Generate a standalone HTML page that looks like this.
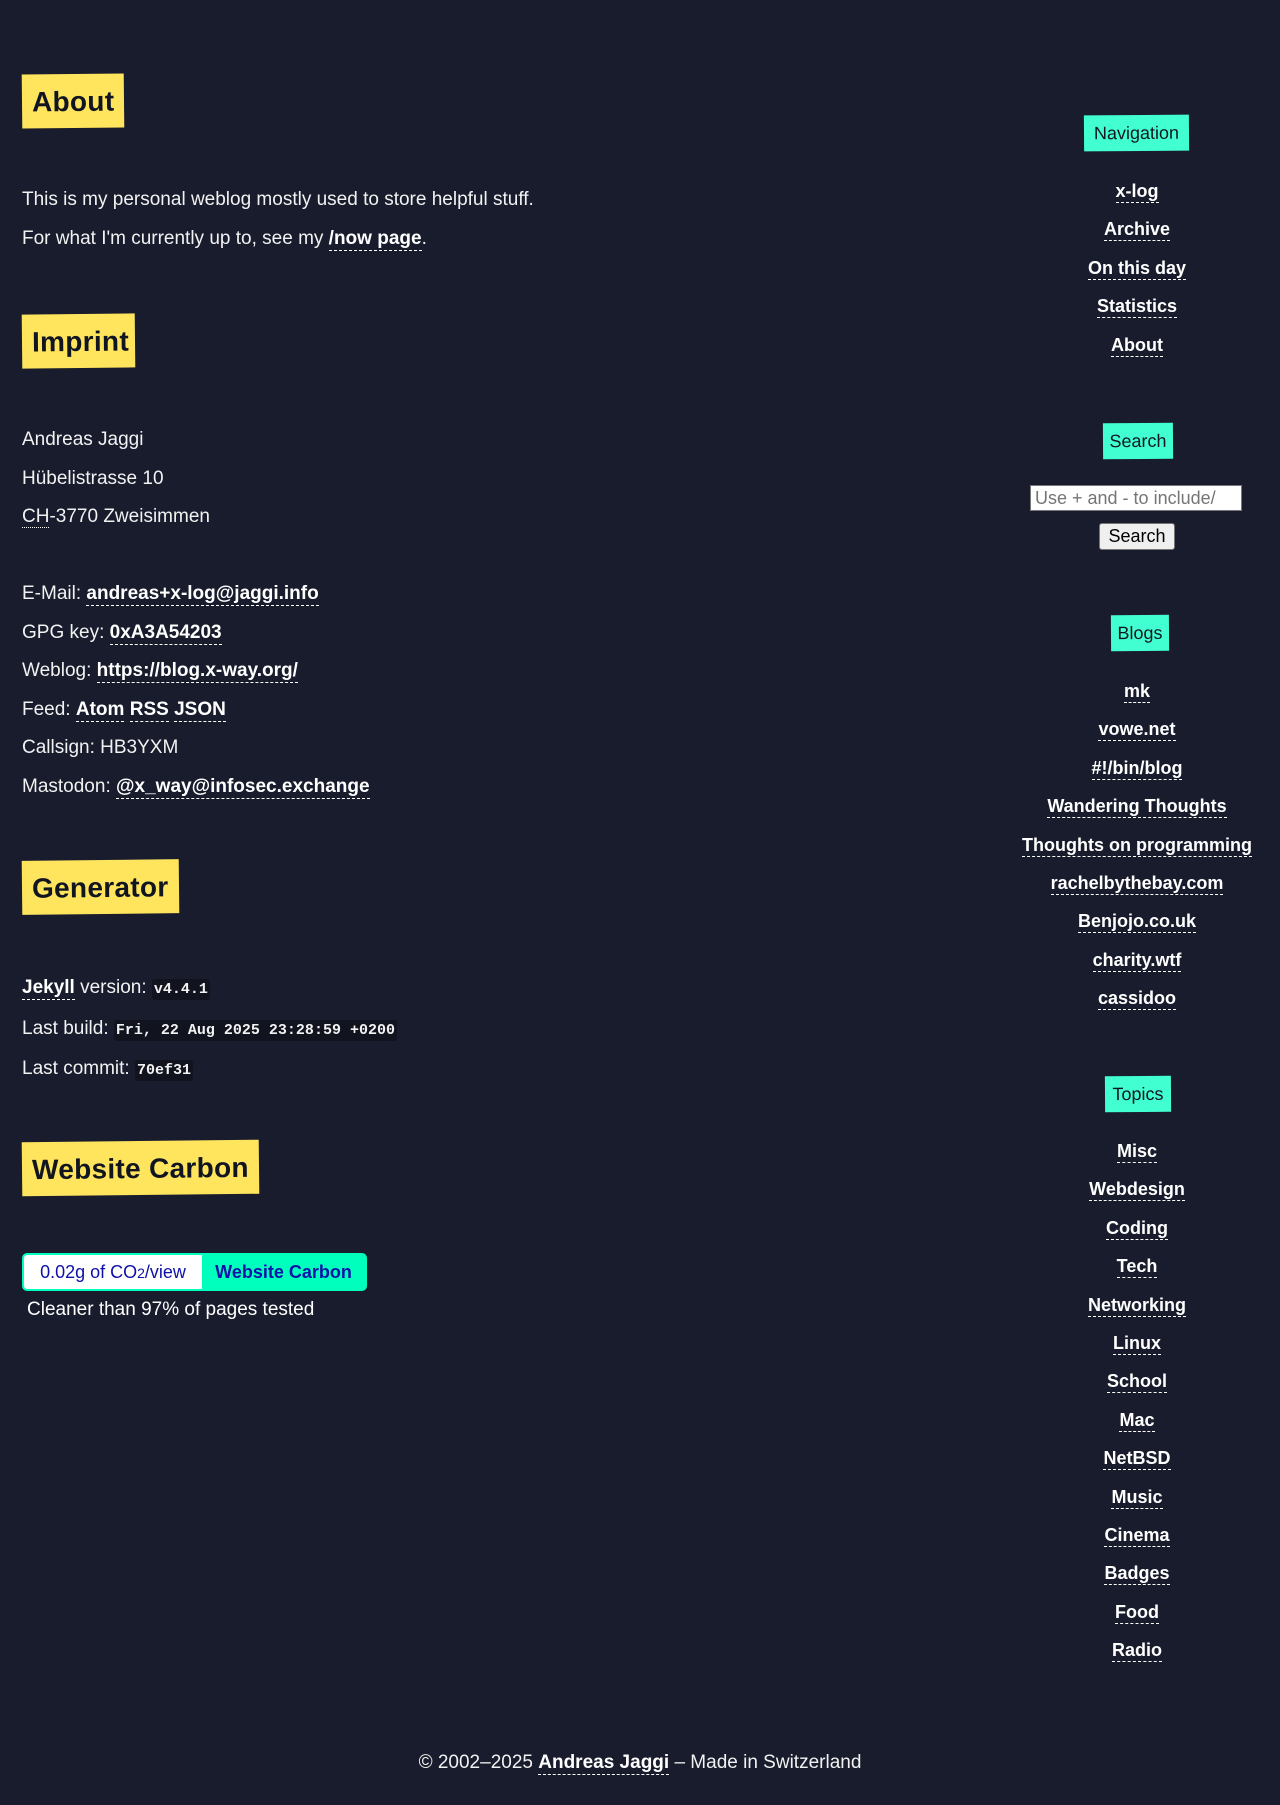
<!DOCTYPE html>
<html><head><meta charset="utf-8"><style>
html,body{margin:0;padding:0;background:#181c2c;}
body{width:1280px;height:1805px;position:relative;overflow:hidden;font-family:"Liberation Sans",sans-serif;color:#f2f2f2;font-size:18px;}
.h{position:absolute;left:22px;background:#ffe55e;color:#111520;font-weight:bold;font-size:28px;padding:0 10px;height:54px;line-height:56px;transform:rotate(-0.6deg);letter-spacing:0.3px}
.blk{position:absolute;left:22px;line-height:38.6px;white-space:nowrap;font-size:19px}
a{color:#fff;font-weight:bold;text-decoration:none;border-bottom:1px dashed #fff;padding-bottom:1px}
code{font-family:"Liberation Mono",monospace;font-weight:bold;font-size:15px;background:#11141f;padding:2px 2px;border-radius:3px}
.lab{position:absolute;background:#42ffd1;color:#111520;font-size:18px;height:36px;line-height:36px;text-align:center;transform:rotate(-0.4deg)}
.side{position:absolute;left:1017px;width:240px;text-align:center;line-height:38.4px}
abbr{text-decoration:none;border-bottom:1px dotted #fff}
</style></head><body>
<div class="h" style="top:74px;width:82px">About</div>
<div class="blk" style="top:181px">This is my personal weblog mostly used to store helpful stuff.<br>For what I'm currently up to, see my <a>/now page</a>.</div>

<div class="h" style="top:314px;width:93px">Imprint</div>
<div class="blk" style="top:421px">Andreas Jaggi<br>Hübelistrasse 10<br><abbr>CH</abbr>-3770 Zweisimmen</div>
<div class="blk" style="top:575px">E-Mail: <a>andreas+x-log@jaggi.info</a><br>GPG key: <a>0xA3A54203</a><br>Weblog: <a>https://blog.x-way.org/</a><br>Feed: <a>Atom</a> <a>RSS</a> <a>JSON</a><br>Callsign: HB3YXM<br>Mastodon: <a>@x_way@infosec.exchange</a></div>

<div class="h" style="top:860px;width:137px">Generator</div>
<div class="blk" style="top:969px"><a>Jekyll</a> version: <code>v4.4.1</code><br>Last build: <code>Fri, 22 Aug 2025 23:28:59 +0200</code><br>Last commit: <code>70ef31</code></div>

<div class="h" style="top:1141px;width:217px">Website Carbon</div>
<div style="position:absolute;left:22px;top:1253px;width:341px;height:34px;border:2px solid #00ffbc;border-radius:5px;background:#00ffbc;font-family:'Liberation Sans',sans-serif;font-size:18px;">
<div style="position:absolute;left:0;top:0;width:178px;height:34px;background:#fff;color:#0e11a8;line-height:34px;text-align:center;border-radius:3px 0 0 3px">0.02g of CO<span style="font-size:14px">2</span>/view</div>
<div style="position:absolute;left:178px;top:0;width:163px;height:34px;color:#0e11a8;font-weight:bold;line-height:34px;text-align:center">Website Carbon</div>
</div>
<div style="position:absolute;left:27px;top:1299px;font-size:19px;color:#fff">Cleaner than 97% of pages tested</div>

<div class="lab" style="left:1084px;top:115px;width:105px">Navigation</div>
<div class="side" style="top:172px"><a>x-log</a><br><a>Archive</a><br><a>On this day</a><br><a>Statistics</a><br><a>About</a></div>

<div class="lab" style="left:1103px;top:423px;width:70px">Search</div>
<div style="position:absolute;left:1030px;top:485px;width:212px;height:26px;background:#fff;border:1px solid #777;box-sizing:border-box;color:#757575;font-size:18px;line-height:24px;padding-left:4px;overflow:hidden;white-space:nowrap">Use + and - to include/</div>
<div style="position:absolute;left:1099px;top:523px;width:76px;height:27px;background:#efefef;border:1px solid #767676;border-radius:3px;box-sizing:border-box;color:#000;font-size:18px;line-height:25px;text-align:center">Search</div>

<div class="lab" style="left:1111px;top:615px;width:58px">Blogs</div>
<div class="side" style="top:672px"><a>mk</a><br><a>vowe.net</a><br><a>#!/bin/blog</a><br><a>Wandering Thoughts</a><br><a>Thoughts on programming</a><br><a>rachelbythebay.com</a><br><a>Benjojo.co.uk</a><br><a>charity.wtf</a><br><a>cassidoo</a></div>

<div class="lab" style="left:1105px;top:1076px;width:66px">Topics</div>
<div class="side" style="top:1132px"><a>Misc</a><br><a>Webdesign</a><br><a>Coding</a><br><a>Tech</a><br><a>Networking</a><br><a>Linux</a><br><a>School</a><br><a>Mac</a><br><a>NetBSD</a><br><a>Music</a><br><a>Cinema</a><br><a>Badges</a><br><a>Food</a><br><a>Radio</a></div>

<div style="position:absolute;left:0;width:1280px;top:1752px;text-align:center;font-size:19px">© 2002–2025 <a>Andreas Jaggi</a> – Made in Switzerland</div>
</body></html>
